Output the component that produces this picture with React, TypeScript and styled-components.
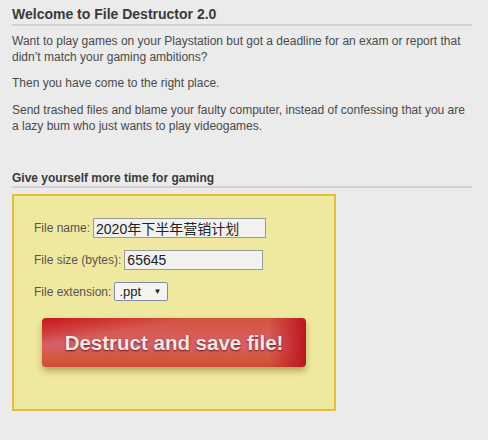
import React from 'react';
import styled, { createGlobalStyle } from 'styled-components';

const GlobalStyle = createGlobalStyle`
    html, body {
        margin: 0;
        padding: 0;
        background: #ebebeb;
    }
    body {
        font-family: 'Liberation Sans', Arial, sans-serif;
        color: #444;
    }
`;

const Page = styled.div`
    width: 460px;
    padding: 6px 16px 20px 12px;
`;

const Title = styled.h1`
    margin: 0;
    padding-bottom: 2px;
    font-size: 14px;
    font-weight: bold;
    color: #3a3a3a;
    border-bottom: 2px solid #d2d2d2;
`;

const SubTitle = styled.h2`
    margin: 37px 0 0;
    padding-bottom: 1px;
    font-size: 12px;
    font-weight: bold;
    color: #3a3a3a;
    border-bottom: 2px solid #d2d2d2;
`;

const Text = styled.p`
    margin: 7px 0 0;
    font-size: 12px;
    line-height: 16px;
    color: #4a4a4a;

    & + & {
        margin-top: 10px;
    }

    &:last-of-type {
        margin-top: 11px;
    }
`;

const Panel = styled.form`
    width: 324px;
    margin-top: 6px;
    box-sizing: border-box;
    height: 217px;
    background: #eee99e;
    border: 2px solid #e3bd3c;
    padding: 22px 0 0 20px;
    display: flex;
    flex-direction: column;
    gap: 12px;
`;

const Row = styled.label`
    display: flex;
    align-items: center;
    gap: 3px;
    font-size: 12px;
    color: #555;
`;

const Field = styled.input<{ $w: number }>`
    width: ${p => p.$w}px;
    height: 20px;
    box-sizing: border-box;
    padding: 0 2px;
    border: 1px solid #9a9a9a;
    background: #f1f1ef;
    font-family: 'Liberation Sans', 'Noto Sans CJK SC', sans-serif;
    font-size: 14px;
    color: #222;
    outline: none;
`;

const Select = styled.div`
    width: 54px;
    height: 19px;
    box-sizing: border-box;
    display: flex;
    align-items: center;
    justify-content: space-between;
    padding: 0 6px 0 4px;
    border: 1px solid #7d8aa8;
    border-radius: 2px;
    background: #f4f4f0;
    font-size: 13px;
    color: #222;
`;

const Arrow = styled.span`
    font-size: 8px;
    color: #222;
`;

const DestructButton = styled.button`
    margin: 5px 0 0 8px;
    width: 264px;
    height: 49px;
    border: none;
    border-radius: 4px;
    background:
        linear-gradient(170deg, rgba(195, 18, 28, 0.9) 0%, rgba(195, 18, 28, 0) 28%),
        linear-gradient(to left, rgba(185, 15, 25, 0.9) 0%, rgba(185, 15, 25, 0) 14%),
        linear-gradient(to bottom, #d4533f 0%, #d65a54 30%, #d75f66 55%, #d4563c 85%, #cc4c36 100%);
    box-shadow: 0 4px 6px rgba(110, 90, 20, 0.45);
    font-family: 'Liberation Sans', Arial, sans-serif;
    font-size: 20.5px;
    font-weight: bold;
    color: #f7e8e8;
    text-shadow: 0 1px 2px rgba(90, 0, 0, 0.8);
    cursor: pointer;
`;

export default function App() {
    return (
        <>
            <GlobalStyle />
            <Page>
                <Title>Welcome to File Destructor 2.0</Title>
                <Text>
                    Want to play games on your Playstation but got a deadline for an exam or report that
                    didn&rsquo;t match your gaming ambitions?
                </Text>
                <Text>Then you have come to the right place.</Text>
                <Text>
                    Send trashed files and blame your faulty computer, instead of confessing that you are a
                    lazy bum who just wants to play videogames.
                </Text>
                <SubTitle>Give yourself more time for gaming</SubTitle>
                <Panel onSubmit={e => e.preventDefault()}>
                    <Row>
                        File name:
                        <Field $w={173} defaultValue="2020年下半年营销计划" />
                    </Row>
                    <Row>
                        File size (bytes):
                        <Field $w={139} defaultValue="65645" />
                    </Row>
                    <Row>
                        File extension:
                        <Select>
                            .ppt <Arrow>▼</Arrow>
                        </Select>
                    </Row>
                    <DestructButton type="submit">Destruct and save file!</DestructButton>
                </Panel>
            </Page>
        </>
    );
}
